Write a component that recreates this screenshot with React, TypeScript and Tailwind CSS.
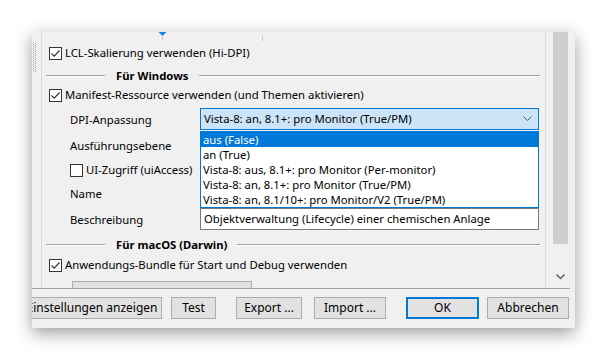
import React from "react"

function Check({ checked = false }: { checked?: boolean }) {
  return (
    <span className="flex h-[13px] w-[13px] shrink-0 items-center justify-center border border-[#333333] bg-white">
      {checked && (
        <svg width="11" height="11" viewBox="0 0 11 11">
          <path d="M1.5 5.5 L4.2 8.2 L9.5 2.5" fill="none" stroke="#333333" strokeWidth="1.2" />
        </svg>
      )}
    </span>
  )
}

function Separator({ title, left = 59, gap = 10 }: { title: string; left?: number; gap?: number }) {
  return (
    <div className="flex h-full items-center pl-[4px] pr-[5px]">
      <div className="h-[2px] border-t border-[#a0a0a0] border-b-white" style={{ width: left, borderBottomWidth: 1 }} />
      <span className="font-bold" style={{ paddingLeft: 11, paddingRight: gap }}>{title}</span>
      <div className="h-[2px] flex-1 border-t border-b border-t-[#a0a0a0] border-b-white" />
    </div>
  )
}

const options = [
  "aus (False)",
  "an (True)",
  "Vista-8: aus, 8.1+: pro Monitor (Per-monitor)",
  "Vista-8: an, 8.1+: pro Monitor (True/PM)",
  "Vista-8: an, 8.1/10+: pro Monitor/V2 (True/PM)",
]

export default function App() {
  return (
    <div className="h-[359px] w-[607px] overflow-hidden bg-white pl-[32px] pt-[32px] font-['Noto_Sans',sans-serif] text-[11.3px] leading-none text-black">
      <div className="flex h-[296px] w-[543px] flex-col overflow-hidden bg-[#f0f0f0] pr-[5px] shadow-[0_5px_16px_rgba(0,0,0,0.4)]">
        {/* scroll area */}
        <div className="flex h-[256px]">
          <div className="w-[9px] shrink-0 pt-[10px] pl-[1px]">
            <svg width="4" height="31" viewBox="0 0 4 31">
              {Array.from({ length: 15 }).map((_, i) => (
                <g key={i}>
                  <rect x="0" y={i * 2} width="1" height="1" fill="#a8a8a8" />
                  <rect x="2" y={i * 2 + 1} width="1" height="1" fill="#a8a8a8" />
                </g>
              ))}
            </svg>
          </div>
          <div className="relative w-[505px] shrink-0 border-l border-r border-[#dadada]">
            {/* ruler */}
            <div className="relative h-[8px]">
              <svg className="absolute left-[116px] top-0" width="9" height="9" viewBox="0 0 9 9">
                <path d="M0.5 0 L8.5 0 L4.5 4 Z" fill="#1a7fd6" />
                <rect x="4" y="5" width="1" height="4" fill="#c8c8c8" />
              </svg>
              <div className="absolute left-[220px] top-[4px] h-[5px] w-px bg-[#c8c8c8]" />
            </div>

            <div className="flex h-[24px] items-center gap-[3px] pl-[7px] pt-[2px]">
              <Check checked />
              <span>LCL-Skalierung verwenden (Hi-DPI)</span>
            </div>

            <div className="h-[22px] pt-px">
              <Separator title="Für Windows" />
            </div>

            <div className="flex h-[18px] items-center gap-[3px] pl-[7px]">
              <Check checked />
              <span>Manifest-Ressource verwenden (und Themen aktivieren)</span>
            </div>

            <div className="h-[4px]" />

            <div className="relative flex h-[22px] items-center">
              <span className="w-[158px] pl-[28px] pt-px">DPI-Anpassung</span>
              <div className="flex h-[22px] w-[339px] items-center justify-between border border-[#0078d7] bg-[#cce4f7] pl-[3px] pr-[6px]">
                <span>Vista-8: an, 8.1+: pro Monitor (True/PM)</span>
                <svg width="9" height="6" viewBox="0 0 9 6">
                  <path d="M0.5 0.5 L4.5 4.5 L8.5 0.5" fill="none" stroke="#606060" strokeWidth="1" />
                </svg>
              </div>
            </div>

            <div className="h-[1px]" />

            <div className="flex h-[28px] items-center pl-[28px] pt-px">
              <span>Ausführungsebene</span>
            </div>

            <div className="flex h-[22px] items-center gap-[3px] pl-[28px]">
              <Check />
              <span>UI-Zugriff (uiAccess)</span>
            </div>

            <div className="flex h-[24px] items-center pl-[28px] pt-px">
              <span>Name</span>
            </div>

            <div className="flex h-[28px] items-center">
              <span className="w-[158px] pl-[28px] pt-px">Beschreibung</span>
              <div className="flex h-[22px] w-[339px] items-center border border-[#7a7a7a] bg-white pl-[3px]">
                Objektverwaltung (Lifecycle) einer chemischen Anlage
              </div>
            </div>

            <div className="h-[23px] pt-px">
              <Separator title="Für macOS (Darwin)" gap={10} />
            </div>

            <div className="flex h-[18px] items-center gap-[3px] pl-[7px]">
              <Check checked />
              <span>Anwendungs-Bundle für Start und Debug verwenden</span>
            </div>

            <div className="h-[7px]" />

            <div className="ml-[30px] h-[7px] w-[180px] border border-b-0 border-[#adadad] bg-[#e1e1e1]" />

            {/* open dropdown list */}
            <div className="absolute left-[158px] top-[99px] w-[339px] border border-[#0078d7] bg-white">
              {options.map((o, i) => (
                <div
                  key={o}
                  className={`flex h-[15px] items-center pl-[2px] ${i === 0 ? "bg-[#0078d7] text-white" : ""}`}
                >
                  {o}
                </div>
              ))}
            </div>
          </div>

          {/* scrollbar */}
          <div className="ml-[6px] flex w-[17px] shrink-0 flex-col justify-between bg-[#f0f0f0] px-[1px]">
            <div className="h-[212px] bg-[#cdcdcd]" />
            <div className="flex h-[17px] items-start justify-center pt-[3px]">
              <svg width="9" height="6" viewBox="0 0 9 6">
                <path d="M0.5 0.5 L4.5 4.5 L8.5 0.5" fill="none" stroke="#606060" strokeWidth="1.5" />
              </svg>
            </div>
          </div>
        </div>

        <div className="h-px bg-[#a0a0a0]" />

        {/* buttons */}
        <div className="flex items-center pt-[8px] text-[12px]">
          <div className="-ml-[10px] flex h-[22px] w-[140px] items-center justify-center border border-[#adadad] bg-[#e1e1e1]">Einstellungen anzeigen</div>
          <div className="ml-[9px] flex h-[22px] w-[45px] items-center justify-center border border-[#adadad] bg-[#e1e1e1]">Test</div>
          <div className="ml-[20px] flex h-[22px] w-[66px] items-center justify-center border border-[#adadad] bg-[#e1e1e1]">Export ...</div>
          <div className="ml-[12px] flex h-[22px] w-[72px] items-center justify-center border border-[#adadad] bg-[#e1e1e1]">Import ...</div>
          <div className="ml-[20px] flex h-[22px] w-[73px] items-center justify-center border-2 border-[#0078d7] bg-[#e1e1e1]">OK</div>
          <div className="ml-[8px] flex h-[22px] w-[82px] items-center justify-center border border-[#adadad] bg-[#e1e1e1]">Abbrechen</div>
        </div>
      </div>
    </div>
  )
}
